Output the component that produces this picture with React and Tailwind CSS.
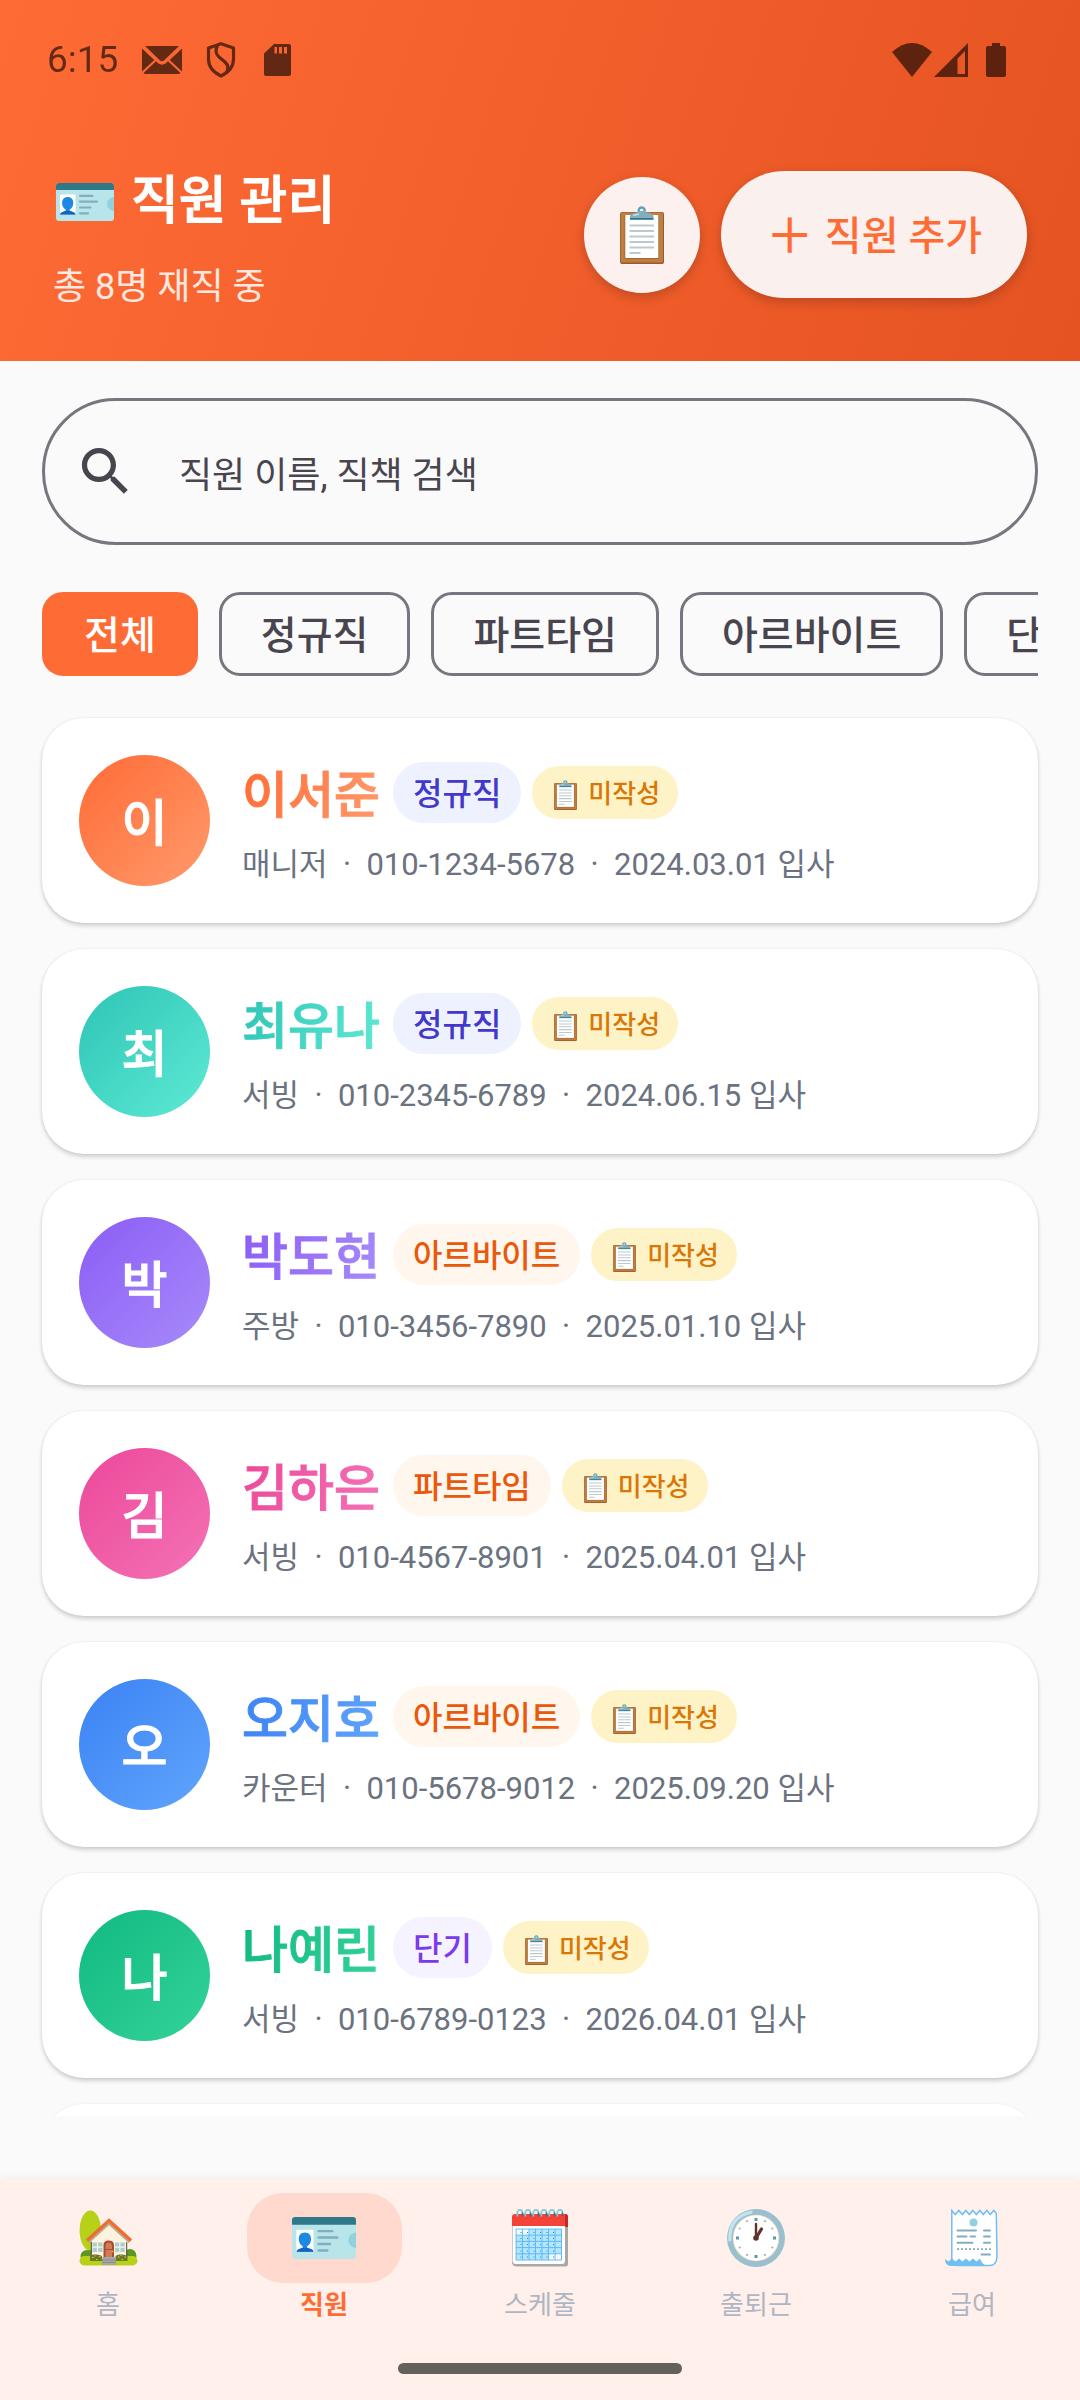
import React, { useState } from 'react';

const filters = ['전체', '정규직', '파트타임', '아르바이트', '단기'];

const badgeStyles = {
	정규직: 'bg-[#EEF2FF] text-[#4338CA]',
	파트타임: 'bg-[#FFF7ED] text-[#EA580C]',
	아르바이트: 'bg-[#FFF7ED] text-[#EA580C]',
	단기: 'bg-[#F5F3FF] text-[#7C3AED]'
};

const employees = [
	{
		name: '이서준',
		type: '정규직',
		role: '매니저',
		phone: '010-1234-5678',
		joined: '2024.03.01',
		colors: 'from-[#FF6B35] to-[#FF9A6C]'
	},
	{
		name: '최유나',
		type: '정규직',
		role: '서빙',
		phone: '010-2345-6789',
		joined: '2024.06.15',
		colors: 'from-[#2EC4B6] to-[#5EEAD4]'
	},
	{
		name: '박도현',
		type: '아르바이트',
		role: '주방',
		phone: '010-3456-7890',
		joined: '2025.01.10',
		colors: 'from-[#8B5CF6] to-[#A78BFA]'
	},
	{
		name: '김하은',
		type: '파트타임',
		role: '서빙',
		phone: '010-4567-8901',
		joined: '2025.04.01',
		colors: 'from-[#EC4899] to-[#F472B6]'
	},
	{
		name: '오지호',
		type: '아르바이트',
		role: '카운터',
		phone: '010-5678-9012',
		joined: '2025.09.20',
		colors: 'from-[#3B82F6] to-[#60A5FA]'
	},
	{
		name: '나예린',
		type: '단기',
		role: '서빙',
		phone: '010-6789-0123',
		joined: '2026.04.01',
		colors: 'from-[#10B981] to-[#34D399]'
	}
];

const IdCard = ({ className }) => (
	<svg className={className} viewBox="0 0 58 38" aria-hidden="true">
		<rect width="58" height="38" rx="3" fill="#B8E5EA" />
		<path d="M0 7V3a3 3 0 0 1 3-3h52a3 3 0 0 1 3 3v4z" fill="#2F7889" />
		<path d="M58 14a7 7 0 0 0 0 14z" fill="#94D1E0" />
		<rect x="4" y="11.500" width="15.500" height="20" rx="1" fill="#fff" />
		<path
			d="M11.700 14c-3.600 0-5.600 2.500-5.600 6 0 3 1.500 5.500 3.600 6.500v1.300L6 29.200c-1.200.5-1.700 1.200-1.700 2.300h15c0-1.100-.5-1.800-1.700-2.300l-3.900-1.400v-1.300c2.100-1 3.600-3.500 3.600-6.500 0-3.500-2-6-5.600-6z"
			fill="#1E88E5"
		/>
		<path d="M4.300 31.500c0-1.100.5-1.800 1.700-2.300l3.700-1.400h4l3.900 1.400c1.200.5 1.700 1.200 1.700 2.300z" fill="#1565C0" />
		<path
			d="M24 12.800h12.500M24 18.600h17M24 24.500h10.500M24 30.300h8"
			stroke="#82AEC0"
			strokeWidth="2.200"
			strokeLinecap="round"
		/>
	</svg>
);

const Clipboard = ({ className }) => (
	<svg className={className} viewBox="0 0 44 58" aria-hidden="true">
		<rect y="6" width="44" height="52" rx="2" fill="#A0562F" />
		<rect x=".600" y="6.500" width="42.400" height="50" rx="1.500" fill="#BD7F41" />
		<rect x="4.500" y="9" width="34.500" height="44" fill="#A8672F" />
		<rect x="5.300" y="9" width="33" height="43" fill="#fff" />
		<path
			d="M9.500 19.500h24.500M9.500 25h24.500M9.500 30.500h24.500M9.500 36h24.500M9.500 41.500h24.500M9.500 47h11"
			stroke="#BCC9CE"
			strokeWidth="2"
		/>
		<circle cx="21.700" cy="4.500" r="3" fill="none" stroke="#62A3B9" strokeWidth="2.400" />
		<path d="M10 13V10.500q0-2.500 3-3l4.500-1q1-1.500 2-1.500h4.500q1 0 2 1.500l4.500 1q3 .5 3 3V13z" fill="#82AEC0" />
		<path d="M10 12h23.500v1.800H10z" fill="#2F7889" />
		<path d="M13 9.500l6-1.500" stroke="#B9E4EA" strokeWidth="1.400" />
	</svg>
);

const House = ({ className }) => (
	<svg className={className} viewBox="0 0 59 56" aria-hidden="true">
		<path d="M9.500 38h3.500v12H9.500z" fill="#855C52" />
		<ellipse cx="11.300" cy="20.500" rx="10.700" ry="20" fill="#B7D118" />
		<ellipse cx="8" cy="46" rx="6.500" ry="6" fill="#5B9821" />
		<ellipse cx="51" cy="46" rx="6.500" ry="7" fill="#5B9821" />
		<rect x=".500" y="46" width="58" height="9.500" rx="4.700" fill="#B7D118" />
		<path d="M12.500 29L30 12l17.500 17v20h-35z" fill="#FFF3E0" />
		<path d="M12.300 32v15M47.700 32v15" stroke="#5D4037" strokeWidth="1" />
		<path d="M9 31.500L30 12.500l21 19" fill="none" stroke="#BCAA8F" strokeWidth="4" />
		<path d="M8 30.500L30 10.500l22 20" fill="none" stroke="#EF6C32" strokeWidth="3.200" />
		<path d="M13.500 32.500h10V42h-10zM36 32.500h9.700V42H36z" fill="#A7D0D5" />
		<path d="M18.500 32.500V42M13.500 37.200h10M40.800 32.500V42M36 37.200h9.700" stroke="#FFF3E0" strokeWidth="1.200" />
		<path d="M24.500 47V35q0-4.500 5.200-4.500T35 35v12z" fill="#A84C30" />
		<path d="M26.500 47V36q0-3.500 3.200-3.500T33 36v11z" fill="#D27B56" />
		<path d="M26.500 39.500H33" stroke="#A84C30" />
		<circle cx="33.500" cy="41.500" r=".900" fill="#FFB300" />
		<path d="M11 46q2-2 5-1.500 4-.5 7 1.500v5H11zM36.500 46q2-2 5-1.500 4-.5 7 1.500v5h-12z" fill="#6B7A2A" />
		<path
			d="M13 47.500h1.500M17 49.500h1.500M20 46.500h1.500M15.500 46h1M39 47h1.500M42.500 49.500H44M45.500 47H47M41.500 45.500h1"
			stroke="#FBC02D"
			strokeWidth="1.200"
		/>
		<path d="M23.500 47h12.800l.7 8H22.800z" fill="#A6A6A6" />
		<path d="M23 50h14M23 52.500h14" stroke="#858585" strokeWidth=".800" />
	</svg>
);

const Calendar = ({ className }) => (
	<svg className={className} viewBox="0 0 56 58" aria-hidden="true">
		<path d="M0 15h56v40q0 2.500-2.500 2.500H4Q0 57 0 53z" fill="#A8A8A8" />
		<path d="M.600 15h52.400v37q0 3-3 3H4q-3.400 0-3.400-3.500z" fill="#fff" />
		<path d="M0 17V8q0-3 3-3h50q3 0 3 3v9z" fill="#F44336" />
		<path d="M53 5q3 0 3 3v10h-3z" fill="#C62828" />
		<path d="M4 20h45.500v31H4z" fill="#B3E5FC" />
		<path d="M4 20h13v6.200H4zM36.500 44.800h13V51h-13z" fill="#F4FAFE" />
		<path
			d="M4 20h45.500v31H4zM10.500 20v31M17 20v31M23.500 20v31M30 20v31M36.500 20v31M43 20v31M4 26.200h45.500M4 32.400h45.500M4 38.600h45.500M4 44.800h45.500"
			fill="none"
			stroke="#58B4F4"
			strokeWidth=".900"
		/>
		<path
			d="M8.500 23.500h38M8.500 29.500h38M8.500 35.500h38M8.500 42h38M8.500 48h38"
			stroke="#1E88E5"
			strokeWidth="1"
			strokeDasharray="1 5.500"
		/>
		<g fill="none" stroke="#82C7D5" strokeWidth="1.700">
			<path d="M5.500 7.500C4.500 3 6 .9 8 .9s2.500 1 2.500 3" />
			<path d="M13.500 7.500C12.500 3 14 .9 16 .9s2.500 1 2.500 3" />
			<path d="M21.500 7.500C20.500 3 22 .9 24 .9s2.500 1 2.500 3" />
			<path d="M29.500 7.500C28.500 3 30 .9 32 .9s2.500 1 2.500 3" />
			<path d="M37.500 7.500C36.500 3 38 .9 40 .9s2.500 1 2.500 3" />
			<path d="M45.500 7.500C44.500 3 46 .9 48 .9s2.500 1 2.500 3" />
		</g>
		<path
			d="M10.500 3.500v4M18.500 3.500v4M26.500 3.500v4M34.500 3.500v4M42.500 3.500v4M50.500 3.500v4"
			stroke="#2F7889"
			strokeWidth="1.600"
		/>
	</svg>
);

const Clock = ({ className }) => (
	<svg className={className} viewBox="0 0 58 58" aria-hidden="true">
		<circle cx="29" cy="29" r="29" fill="#9ABFCF" />
		<circle cx="29" cy="29" r="23.200" fill="#F5E3C4" />
		<circle cx="29" cy="29" r="22.400" fill="#fff" />
		<path d="M2.800 31Q2 8 24 3.200" fill="none" stroke="#C3E5EF" strokeWidth="3.200" strokeLinecap="round" />
		<path d="M27.500 9h3v3h-3zM27.500 46h3v3h-3zM9 27.500h3v3H9zM46 27.500h3v3h-3z" fill="#5F99A8" />
		<path
			d="M37.500 13l1-1.700M44.500 20l1.700-1M44.500 38l1.700 1M37.500 45l1 1.700M20.500 45l-1 1.700M13.500 38l-1.700 1M13.500 20l-1.700-1M20.500 13l-1-1.700"
			stroke="#A3B5BC"
			strokeWidth="2"
		/>
		<path d="M29 29V15" stroke="#5D352C" strokeWidth="2.400" strokeLinecap="round" />
		<path d="M29 29l5.500-9" stroke="#5D352C" strokeWidth="3.200" strokeLinecap="round" />
		<circle cx="29" cy="29" r="2.800" fill="#5D352C" />
	</svg>
);

const Receipt = ({ className }) => (
	<svg className={className} viewBox="0 0 54 58" aria-hidden="true">
		<path
			d="M6.800 54V1.500l3.500 4 3.500-4 3.500 4 3.500-4 3.500 4 3.500-4 3.500 4 3.500-4 3.500 4 3.500-4 3.500 4 3.500-4 2.500 3L52 48q-.5 8-7 8.500H12z"
			fill="#fff"
			stroke="#6FBFF2"
			strokeWidth="1.500"
		/>
		<path
			d="M0 50l3.500 2.500 3.500-3 3.500 3 3.500-3 3.500 3 3.500-3 3.500 3 3.500-3 3.500 3 3.500-3q1.500 6 7.500 7.500H6Q0 56.500 0 50z"
			fill="#6FBFF2"
		/>
		<circle cx="28.500" cy="13.500" r="4" fill="#92D1DF" />
		<path
			d="M12.500 21.500H31M39 21.500h6M12.500 27.500h9M25.500 27.500H30M39 27.500h6M12.500 33.800h15M39 33.800h6M36.500 45.500H45"
			stroke="#82AEC0"
			strokeWidth="2"
			strokeLinecap="round"
		/>
		<path d="M12 40.200h34" stroke="#82AEC0" strokeWidth="1.800" strokeDasharray="2 2" />
	</svg>
);

const tabs = [
	{ label: '홈', Icon: House, size: 'h-14 w-[59px]' },
	{ label: '직원', Icon: IdCard, size: 'h-[42px] w-16' },
	{ label: '스케줄', Icon: Calendar, size: 'h-[58px] w-14' },
	{ label: '출퇴근', Icon: Clock, size: 'h-[58px] w-[58px]' },
	{ label: '급여', Icon: Receipt, size: 'h-[58px] w-[54px]' }
];

const StatusBar = () => (
	<div className="flex h-[120px] items-center justify-between pl-[47px] pr-[74px] text-black">
		<div className="flex items-center opacity-60">
			<span className="text-[37px] leading-10">6:15</span>
			<svg className="ml-6 h-7 w-10" viewBox="0 0 40 28" aria-hidden="true">
				<path d="M3 0h34L22 14.500q-2 1.500-4 0z" fill="currentColor" />
				<path d="M0 2.500L12.300 14 0 25.500zM40 2.500L27.700 14 40 25.500z" fill="currentColor" />
				<path d="M14 15.300l2.500 2.200q3.500 2.300 7 0l2.500-2.200L38.500 27 37 28H3l-1.500-1z" fill="currentColor" />
			</svg>
			<svg className="ml-6 h-9 w-[30px]" viewBox="0 0 30 36" fill="none" stroke="currentColor" aria-hidden="true">
				<path d="M15 1.700L27.500 6v11Q27.500 28 15 34 2.500 28 2.500 17V6z" strokeWidth="3.200" strokeLinejoin="round" />
				<path d="M11.500 3.500Q8 10.500 13 15l6 5q5 4.500 1.500 10.500" strokeWidth="3.200" />
			</svg>
			<svg className="ml-7 h-8 w-[27px]" viewBox="0 0 27 32" aria-hidden="true">
				<path
					d="M10 0h15q2 0 2 2v28q0 2-2 2H2q-2 0-2-2V9.500zM10.500 3v6.500H13V3zM15 3v6.500h3V3zM20 3v6.500h3V3z"
					fill="currentColor"
					fillRule="evenodd"
				/>
			</svg>
		</div>
		<div className="flex items-center opacity-60">
			<svg className="h-[34px] w-10" viewBox="0 0 40 34" fill="currentColor" aria-hidden="true">
				<path d="M0 9Q20-9 40 9L20 34z" />
			</svg>
			<svg className="ml-0.5 h-[34px] w-[34px]" viewBox="0 0 34 34" aria-hidden="true">
				<path d="M34 0v34H0zM31 8l-7.500 7.500V31H31z" fill="currentColor" fillRule="evenodd" />
			</svg>
			<svg className="ml-[18px] h-[34px] w-5" viewBox="0 0 20 34" fill="currentColor" aria-hidden="true">
				<path d="M6 0h8v3h4q2 0 2 2v27q0 2-2 2H2q-2 0-2-2V5q0-2 2-2h4z" />
			</svg>
		</div>
	</div>
);

const EmployeeCard = ({ name, type, role, phone, joined, colors }) => (
	<li className="flex items-center gap-8 rounded-[42px] bg-white p-[37px] shadow-[0_3px_4px_rgba(0,0,0,0.16),0_0_3px_rgba(0,0,0,0.08)]">
		<div
			className={`flex h-[131px] w-[131px] shrink-0 items-center justify-center rounded-full bg-linear-[135deg] pt-2 text-[50px] font-medium text-white [-webkit-text-stroke:1px] ${colors}`}
		>
			{name[0]}
		</div>
		<div>
			<div className="flex items-center">
				<h2
					className={`bg-linear-[110deg] bg-clip-text pt-2 text-[50px] leading-[53px] font-medium text-transparent [-webkit-text-stroke:1px_transparent] ${colors}`}
				>
					{name}
				</h2>
				<span
					className={`ml-[13px] rounded-full px-5 pt-1 text-[32px] leading-[57px] font-medium ${badgeStyles[type]}`}
				>
					{type}
				</span>
				<span className="ml-[11px] flex items-center gap-[7px] rounded-full bg-[#FEF3C7] px-[18px] pt-1 text-[26px] leading-[49px] font-medium text-[#D97706]">
					<Clipboard className="h-[30px] w-[31px]" />
					미작성
				</span>
			</div>
			<p className="mt-7 text-[31px] leading-7 whitespace-pre text-[#6B7280]">
				{`${role}  ·  ${phone}  ·  ${joined} 입사`}
			</p>
		</div>
	</li>
);

function App() {
	const [filter, setFilter] = useState('전체');
	const [tab, setTab] = useState('직원');
	const [query, setQuery] = useState('');

	return (
		<div className="flex h-screen flex-col bg-[#FAFAFA] font-[Roboto,'Noto_Sans_CJK_KR',sans-serif]">
			<header className="bg-linear-[108deg] from-[#FF6B35] to-[#E55322]">
				<StatusBar />
				<div className="flex items-center justify-between px-[53px] pt-[42px] pb-[54px]">
					<div className="pt-1.5 text-white">
						<h1 className="flex items-center gap-3.5 text-[52px] leading-[68px] font-medium [-webkit-text-stroke:1px]">
							<IdCard className="h-[38px] w-16" />
							직원 관리
						</h1>
						<p className="mt-[31px] text-[36px] leading-10 text-white/85">총 8명 재직 중</p>
					</div>
					<div className="flex items-center gap-[21px]">
						<button
							type="button"
							aria-label="계약서"
							className="flex h-[116px] w-[116px] items-center justify-center rounded-full bg-[#FCF1EE] shadow-[0_4px_12px_rgba(0,0,0,0.2)]"
						>
							<Clipboard className="h-[58px] w-11" />
						</button>
						<button
							type="button"
							className="flex h-[127px] items-center gap-[11px] rounded-full bg-[#FAF0ED] px-[45px] pt-1 text-[40px] font-medium text-[#FF6B35] shadow-[0_4px_12px_rgba(0,0,0,0.2)]"
						>
							<span className="text-[48px] leading-[60px]">＋</span>
							직원 추가
						</button>
					</div>
				</div>
			</header>

			<main className="flex min-h-0 flex-1 flex-col pt-[37px] pb-[63px]">
				<label className="mx-[42px] flex h-[147px] shrink-0 items-center rounded-full border-3 border-[#79747E] pr-10 pl-[29px] text-[#49454F]">
					<svg className="h-[63px] w-[63px] shrink-0" viewBox="0 0 24 24" fill="currentColor" aria-hidden="true">
						<path d="M15.500 14h-.79l-.28-.27C15.410 12.590 16 11.110 16 9.500 16 5.910 13.090 3 9.500 3S3 5.910 3 9.500 5.910 16 9.500 16c1.610 0 3.090-.59 4.230-1.570l.27.28v.79l5 4.990L20.490 19l-4.990-5zm-6 0C7.010 14 5 11.990 5 9.500S7.010 5 9.500 5 14 7.010 14 9.500 11.990 14 9.500 14z" />
					</svg>
					<input
						type="text"
						aria-label="직원 이름, 직책 검색"
						placeholder="직원 이름, 직책 검색"
						value={query}
						onChange={(e) => setQuery(e.target.value)}
						className="ml-[42px] h-16 min-w-0 flex-1 bg-transparent pt-2 text-[36px] outline-none placeholder:text-[#49454F]"
					/>
				</label>

				<div className="mx-[42px] mt-[47px] flex shrink-0 gap-[21px] overflow-hidden">
					{filters.map((item) => (
						<button
							key={item}
							type="button"
							onClick={() => setFilter(item)}
							className={`h-[84px] shrink-0 rounded-[21px] border-3 px-[39px] pt-1 text-[39px] leading-[60px] font-medium ${item ===
							filter
								? 'border-[#FF6B35] bg-[#FF6B35] text-white'
								: 'border-[#79747E] text-[#49454F]'}`}
						>
							{item}
						</button>
					))}
				</div>

				<ul className="mt-[22px] flex min-h-0 flex-1 flex-col gap-[26px] overflow-hidden px-[42px] pt-5">
					{employees.map((employee) => <EmployeeCard key={employee.phone} {...employee} />)}
					<li
						aria-hidden="true"
						className="h-[205px] shrink-0 rounded-[42px] bg-white shadow-[0_0_3px_rgba(0,0,0,0.08)]"
					/>
				</ul>
			</main>

			<nav className="bg-[#FFF0EB] pt-3.5 pb-[26px] shadow-[0_-2px_8px_rgba(0,0,0,0.05)]">
				<div className="grid grid-cols-5">
					{tabs.map(({ label, Icon, size }) => (
						<button
							key={label}
							type="button"
							onClick={() => setTab(label)}
							className="flex flex-col items-center"
						>
							<span
								className={`flex h-[90px] w-[155px] items-center justify-center rounded-[36px] ${label === tab
									? 'bg-[#FFD9CD]'
									: ''}`}
							>
								<Icon className={size} />
							</span>
							<span
								className={`mt-0.5 text-[26px] leading-10 ${label === tab
									? 'font-bold text-[#FF6B35]'
									: 'text-[#B0B5C3]'}`}
							>
								{label}
							</span>
						</button>
					))}
				</div>
				<div className="mx-auto mt-[38px] h-[11px] w-[284px] rounded-full bg-[#66605D]" />
			</nav>
		</div>
	);
}

export default App;
